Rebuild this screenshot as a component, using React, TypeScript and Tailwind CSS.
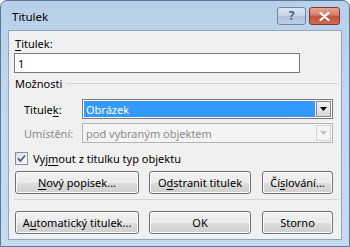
import React from "react";

const Btn = ({ children, className = "" }: { children: React.ReactNode; className?: string }) => (
  <div
    className={
      "h-[23px] rounded-[3px] border border-[#707070] bg-[linear-gradient(#f2f2f2_0%,#ebebeb_50%,#dddddd_51%,#cfcfcf_100%)] shadow-[inset_0_0_0_1px_#fcfcfc] flex items-center justify-center text-black " +
      className
    }
  >
    {children}
  </div>
);

export default function App() {
  return (
    <div
      className="w-[350px] h-[247px] bg-[linear-gradient(180deg,#b7cfe8_0%,#c3d8ee_40%,#c6dbf0_100%)] rounded-t-[7px] border border-[#5b7898] flex flex-col text-[11px] leading-[15px] text-black"
      style={{ fontFamily: '"Noto Sans", "Open Sans", sans-serif' }}
    >
      {/* title bar */}
      <div className="h-[29px] flex items-center pl-[11px] pr-[9px] shrink-0">
        <span className="text-[11.5px] text-black pt-[2px]">Titulek</span>
        <div className="ml-auto flex items-center gap-[3px] pt-[1px]">
          <div className="w-[29px] h-[18px] rounded-[3px] border border-[#6d87a6] bg-[linear-gradient(#dce7f3_0%,#c4d5e8_50%,#aec3dc_51%,#bccfe4_100%)] flex items-center justify-center text-[12px] font-bold text-[#4a6385] leading-none">
            ?
          </div>
          <div className="w-[31px] h-[18px] rounded-[3px] border border-[#7d3a32] bg-[linear-gradient(#e8a493_0%,#d27d69_45%,#c0513b_50%,#d16b53_100%)] flex items-center justify-center">
            <svg width="11" height="9" viewBox="0 0 11 9">
              <path d="M1.5 1 L9.5 8 M9.5 1 L1.5 8" stroke="#ffffff" strokeWidth="2.2" strokeLinecap="round" />
            </svg>
          </div>
        </div>
      </div>
      {/* client */}
      <div className="mx-[7px] h-[210px] bg-[#f0f0f0] border border-[#8fa6bf] flex flex-col px-[5px] pt-[5px]">
        <div className="h-[15px] ml-[1px]">
          <span className="underline underline-offset-[2px]">T</span>itulek:
        </div>
        <div className="mt-[2px] w-[286px] h-[20px] bg-white border border-[#7a7a7a] flex items-center pl-[3px]">1</div>
        <div className="mt-[3px] flex items-center gap-[4px] h-[15px]">
          <span className="ml-[1px]">Možnosti</span>
          <div className="flex-1 h-px bg-[#d5d5d5] mr-[-3px]" />
        </div>
        <div className="mt-[8px] flex items-center h-[20px]">
          <div className="w-[68px] pl-[10px]">
            Titule<span className="underline underline-offset-[2px]">k</span>:
          </div>
          <div className="flex-1 h-[20px] bg-white border border-[#7a7a7a] flex p-[1px] mr-[3px]">
            <div className="flex-1 bg-[#3399ff] text-white flex items-center pl-[2px]">Obrázek</div>
            <div className="w-[15px] ml-[1px] border border-[#8a8a8a] bg-[linear-gradient(#f2f2f2,#d8d8d8)] flex items-center justify-center">
              <svg width="7" height="4" viewBox="0 0 7 4">
                <path d="M0 0 H7 L3.5 4 Z" fill="#000" />
              </svg>
            </div>
          </div>
        </div>
        <div className="mt-[4px] flex items-center h-[20px]">
          <div className="w-[68px] pl-[10px] text-[#8b8b8b]">Umístění:</div>
          <div className="flex-1 h-[20px] bg-[#f4f4f4] border border-[#b5b5b5] flex p-[1px] mr-[3px]">
            <div className="flex-1 text-[#8b8b8b] flex items-center pl-[2px]">pod vybraným objektem</div>
            <div className="w-[15px] ml-[1px] border border-[#d5d5d5] bg-[#f4f4f4] flex items-center justify-center">
              <svg width="7" height="4" viewBox="0 0 7 4">
                <path d="M0 0 H7 L3.5 4 Z" fill="#c0c0c0" />
              </svg>
            </div>
          </div>
        </div>
        <div className="mt-[8px] flex items-center h-[15px] gap-[5px] pl-[1px]">
          <div className="w-[13px] h-[13px] border border-[#8e8f8f] bg-[linear-gradient(135deg,#dcdcdc,#ffffff)] flex items-center justify-center">
            <svg width="9" height="9" viewBox="0 0 9 9">
              <path d="M1 4.5 L3.5 7 L8 1.5" stroke="#4a5f97" strokeWidth="1.8" fill="none" />
            </svg>
          </div>
          <span>
            Vyj<span className="underline underline-offset-[2px]">m</span>out z titulku typ objektu
          </span>
        </div>
        <div className="mt-[5px] flex gap-[10px] pl-[1px]">
          <Btn className="w-[124px]">
            <span>
              <span className="underline underline-offset-[2px]">N</span>ový popisek...
            </span>
          </Btn>
          <Btn className="w-[102px]">
            <span>
              O<span className="underline underline-offset-[2px]">d</span>stranit titulek
            </span>
          </Btn>
          <Btn className="w-[71px] ml-[1px]">
            <span>
              Čí<span className="underline underline-offset-[2px]">s</span>lování...
            </span>
          </Btn>
        </div>
        <div className="mt-[5px] h-px bg-[#d5d5d5] mr-[-3px]" />
        <div className="mt-[11px] flex gap-[10px] pl-[1px]">
          <Btn className="w-[124px]">
            <span>
              A<span className="underline underline-offset-[2px]">u</span>tomatický titulek...
            </span>
          </Btn>
          <Btn className="w-[102px]">OK</Btn>
          <Btn className="w-[71px] ml-[1px]">Storno</Btn>
        </div>
      </div>
    </div>
  );
}
